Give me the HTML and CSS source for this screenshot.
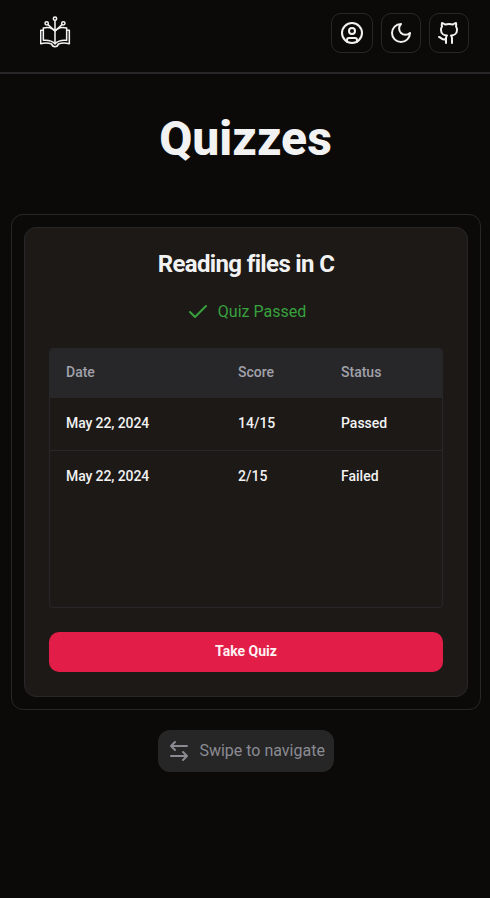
FILE: index.html
```html
<!DOCTYPE html>
<html lang="en">
<head>
<meta charset="utf-8">
<title>Quizzes</title>
<link rel="stylesheet" href="styles.css">
</head>
<body>
<header class="header">
  <svg class="logo" viewBox="30 24 93 96">
    <circle cx="75" cy="32" r="5"/><circle cx="50" cy="46" r="5"/><circle cx="100" cy="46" r="5"/>
    <path d="M75 37V107M54 50L75 69L96 50"/>
    <path d="M60 59Q49 58 40 60V97Q61 94 75 107Q89 94 110 97V60Q101 58 90 59M60 59Q69 62 75 69Q81 62 90 59"/>
    <path d="M40 67H32V107Q51 103 65 108Q67 116 75 116Q83 116 85 108Q99 103 118 107V67H110"/>
  </svg>
  <nav class="actions">
    <button class="icon-button wide" aria-label="Account"><svg class="icon" viewBox="0 0 24 24"><circle cx="12" cy="12" r="10"/><circle cx="12" cy="10" r="3"/><path d="M7 20.662V19a2 2 0 0 1 2-2h6a2 2 0 0 1 2 2v1.662"/></svg></button>
    <button class="icon-button" aria-label="Theme"><svg class="icon" viewBox="0 0 24 24"><path d="M12 3a6 6 0 0 0 9 9 9 9 0 1 1-9-9Z"/></svg></button>
    <button class="icon-button" aria-label="GitHub"><svg class="icon" viewBox="0 0 24 24"><path d="M15 22v-4a4.8 4.8 0 0 0-1-3.500c3 0 6-2 6-5.500.08-1.250-.27-2.480-1-3.500.28-1.150.28-2.350 0-3.500 0 0-1 0-3 1.500-2.640-.5-5.360-.5-8 0C6 2 5 2 5 2c-.3 1.150-.3 2.350 0 3.500A5.403 5.403 0 0 0 4 9c0 3.500 3 5.500 6 5.500-.39.49-.68 1.050-.85 1.650-.17.6-.22 1.230-.15 1.850v4"/><path d="M9 18c-4.510 2-5-2-7-2"/></svg></button>
  </nav>
</header>
<main class="main">
  <h1 class="title">Quizzes</h1>
  <section class="frame">
    <article class="card">
      <h2 class="card-title">Reading files in C</h2>
      <p class="result"><svg class="icon" viewBox="0 0 24 24"><path d="M20 6 9 17l-5-5"/></svg><span>Quiz Passed</span></p>
      <div class="table">
        <div class="row head"><span>Date</span><span>Score</span><span>Status</span></div>
        <div class="row"><span class="date">May 22, 2024</span><span>14/15</span><span>Passed</span></div>
        <div class="row"><span class="date">May 22, 2024</span><span>2/15</span><span>Failed</span></div>
      </div>
      <button class="take">Take Quiz</button>
    </article>
  </section>
  <div class="hint"><svg class="icon" viewBox="0 0 24 24"><path d="M8 3 4 7l4 4M4 7h16M16 21l4-4-4-4M20 17H4"/></svg><span>Swipe to navigate</span></div>
</main>
</body>
</html>
```
FILE: styles.css
```css
* { box-sizing: border-box; }
body {
  margin: 0;
  min-height: 898px;
  background: #0c0a09;
  color: #f2f2f2;
  font: 400 16px/24px Roboto, sans-serif;
}
h1, h2, p { margin: 0; }
button { font-family: inherit; }
svg { fill: none; stroke: currentColor; stroke-linecap: round; stroke-linejoin: round; }
.icon { width: 24px; height: 24px; stroke-width: 2; flex: none; display: block; }

.header {
  height: 74px;
  padding: 13px 21px 0 40px;
  border-bottom: 2px solid #27272a;
  display: flex;
  justify-content: space-between;
  align-items: flex-start;
}
.logo { width: 31px; height: 32px; margin-top: 3px; stroke-width: 4.6; }
.actions { display: flex; gap: 8px; }
.icon-button {
  width: 40px;
  height: 40px;
  padding: 0;
  display: flex;
  align-items: center;
  justify-content: center;
  color: inherit;
  background: transparent;
  border: 1px solid #27272a;
  border-radius: 10px;
}
.wide { width: 42px; }

.main { display: flex; flex-direction: column; align-items: center; }
.title {
  margin: 41px 0 51px 1px;
  font-size: 48px;
  line-height: 48px;
  font-weight: 800;
}
.frame {
  width: 470px;
  height: 496px;
  margin-left: 2px;
  padding: 12px;
  border: 1px solid #27272a;
  border-radius: 12px;
}
.card {
  height: 470px;
  padding: 24px;
  display: flex;
  flex-direction: column;
  background: #1c1917;
  border: 1px solid #27272a;
  border-radius: 12px;
}
.card-title {
  font-size: 24px;
  line-height: 24px;
  font-weight: 700;
  letter-spacing: -0.65px;
  text-align: center;
}
.result {
  margin: 24px 0;
  display: flex;
  justify-content: center;
  gap: 8px;
  color: #38a13e;
}
.table {
  height: 260px;
  border: 1px solid #27272a;
  border-radius: 4px;
  overflow: hidden;
  font-size: 14px;
  line-height: 20px;
  font-weight: 500;
}
.row {
  height: 53px;
  padding: 0 16px 2px;
  display: grid;
  grid-template-columns: 172px 103px 1fr;
  align-items: center;
  border-bottom: 1px solid #27272a;
}
.row:last-child { border-bottom: 0; padding-bottom: 3px; }
.head { height: 49px; background: #27272a; color: #a1a1aa; }
.date { letter-spacing: -0.1px; }
.take {
  height: 40px;
  margin-top: 24px;
  padding: 0 0 2px;
  border: 0;
  border-radius: 10px;
  background: #e11d48;
  color: #fff1f2;
  font-size: 14px;
  font-weight: 700;
}
.hint {
  width: 176px;
  height: 42px;
  margin: 20px 0 0 2px;
  padding-left: 9px;
  display: flex;
  align-items: center;
  gap: 8.4px;
  border-radius: 12px;
  background: #262626;
  color: #8b8b93;
  white-space: nowrap;
}
```
